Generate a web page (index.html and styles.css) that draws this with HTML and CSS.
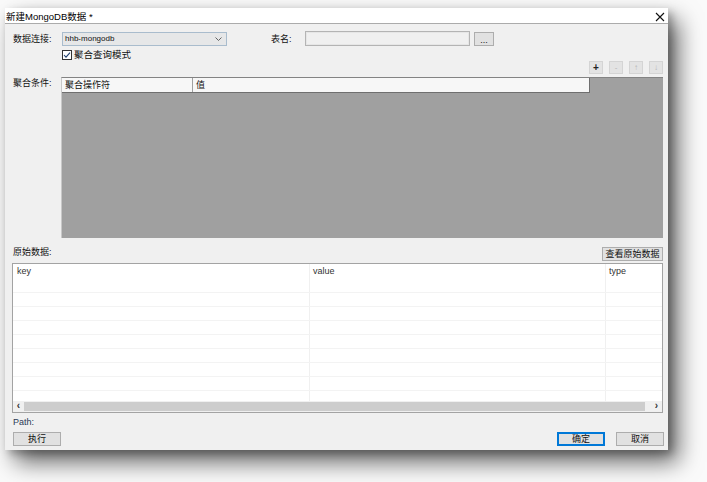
FILE: index.html
```html
<!DOCTYPE html>
<html lang="zh-CN">
<head>
    <meta charset="UTF-8">
    <meta name="viewport" content="width=device-width, initial-scale=1.0">
    <title>新建MongoDB数据</title>
    <link rel="stylesheet" href="styles.css">
</head>
<body>
    <div class="window">
        <div class="titlebar">
            <span class="title">新建MongoDB数据 *</span>
            <svg class="close" width="10" height="10" viewBox="0 0 10 10">
                <path d="M1 1 L9 9 M9 1 L1 9" stroke="#111" stroke-width="1.1" fill="none"/>
            </svg>
        </div>

        <div class="content">
            <div class="conn-row">
                <span class="label label-conn">数据连接:</span>
                <div class="combo">
                    <span>hhb-mongodb</span>
                    <svg width="7" height="4" viewBox="0 0 7 4">
                        <path d="M0.5 0.5 L3.5 3.5 L6.5 0.5" stroke="#555" stroke-width="0.9" fill="none"/>
                    </svg>
                </div>
                <span class="label label-table">表名:</span>
                <div class="textbox"></div>
                <button class="btn btn-browse">...</button>
            </div>

            <div class="check-row">
                <svg class="check" width="10" height="10" viewBox="0 0 10 10">
                    <rect x="0.5" y="0.5" width="9" height="9" fill="#fff" stroke="#333"/>
                    <path d="M2 5 L4 7.2 L8 2.6" stroke="#1f3f6e" stroke-width="1.1" fill="none"/>
                </svg>
                <span>聚合查询模式</span>
            </div>

            <div class="tools">
                <button class="tool">+</button>
                <button class="tool off">-</button>
                <button class="tool off">↑</button>
                <button class="tool off">↓</button>
            </div>

            <div class="agg-row">
                <span class="label label-agg">聚合条件:</span>
                <div class="agg-grid">
                    <div class="agg-head">
                        <div class="agg-cell col-op">聚合操作符</div>
                        <div class="agg-cell col-val">值</div>
                    </div>
                </div>
            </div>

            <div class="raw-row">
                <span class="label">原始数据:</span>
                <button class="btn btn-view">查看原始数据</button>
            </div>

            <div class="data-table">
                <div class="dt-rows">
                    <div class="dt-row dt-head">
                        <div class="dt-cell c-key">key</div>
                        <div class="dt-cell c-value">value</div>
                        <div class="dt-cell c-type">type</div>
                    </div>
                    <div class="dt-row"><div class="dt-cell c-key"></div><div class="dt-cell c-value"></div><div class="dt-cell c-type"></div></div>
                    <div class="dt-row"><div class="dt-cell c-key"></div><div class="dt-cell c-value"></div><div class="dt-cell c-type"></div></div>
                    <div class="dt-row"><div class="dt-cell c-key"></div><div class="dt-cell c-value"></div><div class="dt-cell c-type"></div></div>
                    <div class="dt-row"><div class="dt-cell c-key"></div><div class="dt-cell c-value"></div><div class="dt-cell c-type"></div></div>
                    <div class="dt-row"><div class="dt-cell c-key"></div><div class="dt-cell c-value"></div><div class="dt-cell c-type"></div></div>
                    <div class="dt-row"><div class="dt-cell c-key"></div><div class="dt-cell c-value"></div><div class="dt-cell c-type"></div></div>
                    <div class="dt-row"><div class="dt-cell c-key"></div><div class="dt-cell c-value"></div><div class="dt-cell c-type"></div></div>
                    <div class="dt-row"><div class="dt-cell c-key"></div><div class="dt-cell c-value"></div><div class="dt-cell c-type"></div></div>
                </div>
                <div class="hscroll">
                    <span class="arrow">&lsaquo;</span>
                    <div class="track"><div class="thumb"></div></div>
                    <span class="arrow">&rsaquo;</span>
                </div>
            </div>

            <div class="path">Path:</div>

            <div class="footer">
                <button class="btn btn-foot">执行</button>
                <button class="btn btn-foot btn-ok">确定</button>
                <button class="btn btn-foot btn-cancel">取消</button>
            </div>
        </div>
    </div>
</body>
</html>
```

FILE: styles.css
```css
html {
    background: #fafafa;
}

body {
    margin: 0;
    padding: 8px 0 40px 5px;
    font-family: "Liberation Sans", "Noto Sans CJK SC", sans-serif;
    font-size: 9px;
    color: #111;
}

.window {
    width: 663px;
    height: 442px;
    background: #f0f0f0;
    box-shadow: 10px 12px 22px rgba(0, 0, 0, 0.6), 4px 4px 8px rgba(0, 0, 0, 0.25);
    display: flex;
    flex-direction: column;
}

/* title bar */
.titlebar {
    height: 15px;
    background: #fff;
    border-bottom: 1px solid #ababab;
    display: flex;
    align-items: center;
    justify-content: space-between;
    padding: 0 3px 0 1px;
    font-size: 9.5px;
    color: #000;
}

.close {
    margin-top: 2px;
}

.content {
    padding: 0 5px 0 8px;
    display: flex;
    flex-direction: column;
}

.label {
    line-height: 10px;
    color: #111;
}

button {
    font-family: inherit;
    font-size: 9px;
    color: #111;
    padding: 0;
    margin: 0;
    cursor: pointer;
}

.btn {
    background: #e1e1e1;
    border: 1px solid #adadad;
    height: 14px;
    line-height: 12px;
}

/* connection row */
.conn-row {
    margin-top: 7px;
    height: 15px;
    display: flex;
    align-items: center;
}

.label-conn {
    width: 49px;
}

.combo {
    width: 165px;
    height: 14px;
    box-sizing: border-box;
    background: #e6e7e8;
    border: 1px solid #a9bccd;
    display: flex;
    align-items: center;
    justify-content: space-between;
    padding: 0 4px 0 2px;
    font-size: 8px;
}

.label-table {
    margin-left: 44px;
    width: 34px;
}

.textbox {
    width: 165px;
    height: 15px;
    box-sizing: border-box;
    border: 1px solid #b4b4b4;
    box-shadow: inset 0 0 0 1px #e6e6e6;
    background: #f0f0f0;
}

.btn-browse {
    margin-left: 4px;
    width: 20px;
    line-height: 14px;
}

/* checkbox */
.check-row {
    margin-top: 4px;
    margin-left: 49px;
    height: 10px;
    display: flex;
    align-items: center;
    gap: 2px;
    line-height: 10px;
    font-size: 9.5px;
}

/* grid toolbar */
.tools {
    margin-top: 1px;
    height: 13px;
    display: flex;
    justify-content: flex-end;
    gap: 6px;
}

.tool {
    width: 14px;
    height: 13px;
    background: #e3e3e3;
    border: 1px solid #d4d4d4;
    font-size: 10px;
    line-height: 10px;
    font-weight: bold;
    color: #222;
}

.tool.off {
    color: #b5b5b5;
    font-weight: normal;
    font-size: 8px;
}

/* aggregation grid */
.agg-row {
    margin-top: 3px;
    display: flex;
}

.label-agg {
    width: 48px;
    padding-top: 1px;
}

.agg-grid {
    width: 602px;
    height: 161px;
    box-sizing: border-box;
    background: #a0a0a0;
    border-top: 1px solid #838383;
    border-left: 1px solid #c8c8c8;
}

.agg-head {
    width: 527px;
    height: 14px;
    display: flex;
    background: #f7f7f7;
    border-bottom: 1px solid #6f6f6f;
    border-right: 1px solid #6f6f6f;
}

.agg-cell {
    line-height: 14px;
    padding-left: 3px;
    box-sizing: border-box;
}

.col-op {
    width: 131px;
    border-right: 1px solid #a0a0a0;
}

.col-val {
    flex: 1;
}

/* raw data */
.raw-row {
    margin-top: 9px;
    height: 14px;
    display: flex;
    justify-content: space-between;
}

.btn-view {
    width: 61px;
}

.data-table {
    margin-top: 2px;
    margin-left: -1px;
    height: 150px;
    box-sizing: border-box;
    border: 1px solid #a3a3a3;
    background: #fff;
    display: flex;
    flex-direction: column;
    overflow: hidden;
}

.dt-rows {
    flex: 1;
    overflow: hidden;
}

.dt-row {
    display: flex;
    height: 14px;
    border-bottom: 1px solid #f3f3f3;
    box-sizing: border-box;
}

.dt-head {
    height: 29px;
    align-items: flex-start;
}

.dt-head .dt-cell {
    height: 28px;
    line-height: 15px;
    color: #333;
}

.dt-cell {
    box-sizing: border-box;
    flex-shrink: 0;
    height: 13px;
    border-right: 1px solid #f0f0f0;
}

.c-key {
    width: 297px;
    padding-left: 4px;
}

.c-value {
    width: 296px;
    padding-left: 3px;
}

.c-type {
    width: 80px;
    padding-left: 3px;
}

.hscroll {
    height: 11px;
    background: #f0f0f0;
    display: flex;
    align-items: stretch;
}

.arrow {
    width: 11px;
    text-align: center;
    font-size: 10px;
    line-height: 10px;
    font-weight: bold;
    color: #333;
}

.track {
    flex: 1;
    padding: 1px 6px 1px 0;
}

.thumb {
    height: 100%;
    background: #cdcdcd;
}

.path {
    margin-top: 3px;
    height: 12px;
    line-height: 12px;
    color: #2b3a55;
}

/* bottom buttons */
.footer {
    margin-top: 4px;
    margin-right: -1px;
    display: flex;
}

.btn-foot {
    width: 48px;
}

.btn-ok {
    margin-left: auto;
    border-color: #0078d7;
    box-shadow: inset 0 0 0 1px #0078d7;
}

.btn-cancel {
    margin-left: 11px;
}
```
